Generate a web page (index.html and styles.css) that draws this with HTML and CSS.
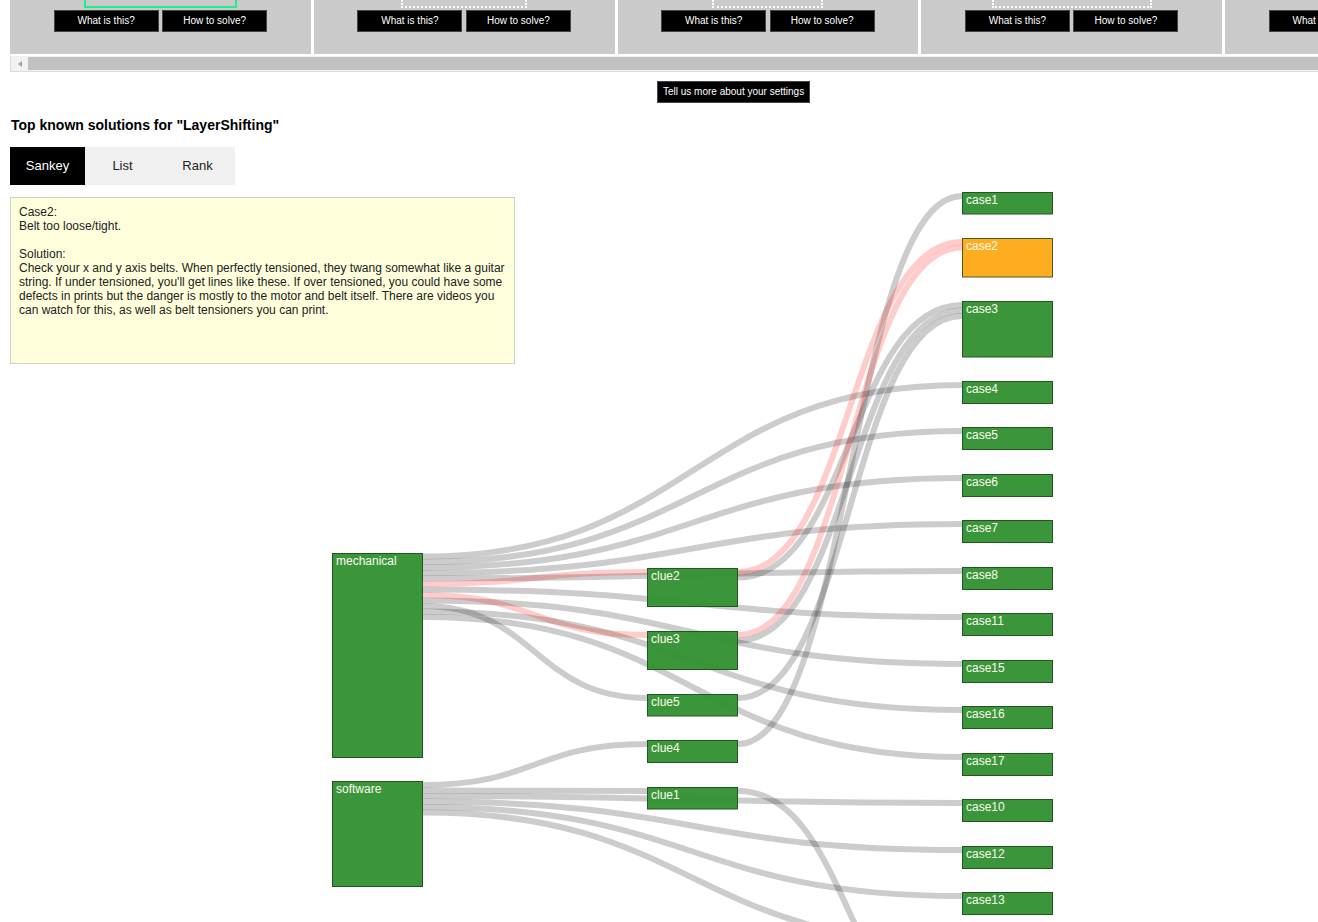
FILE: index.html
```html
<!DOCTYPE html>
<html lang="en">
<head>
<meta charset="utf-8">
<title>Top known solutions</title>
<link rel="stylesheet" href="styles.css">
</head>
<body>
<div class="page">
  <div class="strip">
    <div class="panels">
      <div class="panel">
        <div class="thumb thumb-new t1"></div>
        <div class="btns"><button class="btn">What is this?</button><button class="btn">How to solve?</button></div>
      </div>
      <div class="panel">
        <div class="thumb thumb-dot t2"></div>
        <div class="btns"><button class="btn">What is this?</button><button class="btn">How to solve?</button></div>
      </div>
      <div class="panel">
        <div class="thumb thumb-dot t3"></div>
        <div class="btns"><button class="btn">What is this?</button><button class="btn">How to solve?</button></div>
      </div>
      <div class="panel">
        <div class="thumb thumb-dot t4"></div>
        <div class="btns"><button class="btn">What is this?</button><button class="btn">How to solve?</button></div>
      </div>
      <div class="panel">
        <div class="thumb t5"></div>
        <div class="btns"><button class="btn">What is this?</button><button class="btn">How to solve?</button></div>
      </div>
    </div>
    <div class="hbar"><div class="hbar-btn"><span class="hbar-arrow"></span></div><div class="hbar-thumb"></div></div>
  </div>

  <div class="settings-row"><button class="btn btn-settings">Tell us more about your settings</button></div>

  <div class="title">Top known solutions for "LayerShifting"</div>

  <div class="tabs">
    <div class="tab active">Sankey</div>
    <div class="tab">List</div>
    <div class="tab">Rank</div>
  </div>

  <div class="chart">
    <svg class="sankey" width="1308" height="737" viewBox="10 185 1308 737">
      <g class="links">
        <path class="link" d="M423,556.5C692.5,556.5 692.5,385 962,385"/>
        <path class="link" d="M423,562C692.5,562 692.5,431 962,431"/>
        <path class="link" d="M423,567.5C692.5,567.5 692.5,478 962,478"/>
        <path class="link" d="M423,573C692.5,573 692.5,524 962,524"/>
        <path class="link" d="M423,578.5C692.5,578.5 692.5,571 962,571"/>
        <path class="link" d="M423,589.5C692.5,589.5 692.5,617 962,617"/>
        <path class="link" d="M423,600.5C692.5,600.5 692.5,664 962,664"/>
        <path class="link" d="M423,606C535,606 535,698 647,698"/>
        <path class="link" d="M423,611.5C692.5,611.5 692.5,710 962,710"/>
        <path class="link" d="M423,617C692.5,617 692.5,757 962,757"/>
        <path class="link" d="M423,785C535,785 535,744 647,744"/>
        <path class="link" d="M423,790.5C535,790.5 535,791 647,791"/>
        <path class="link" d="M423,796C692.5,796 692.5,803 962,803"/>
        <path class="link" d="M423,801.5C692.5,801.5 692.5,850 962,850"/>
        <path class="link" d="M423,807C692.5,807 692.5,896 962,896"/>
        <path class="link" d="M423,812.5C692.5,812.5 692.5,943 962,943"/>
        <path class="link" d="M738,577.5C850,577.5 850,305 962,305"/>
        <path class="link" d="M738,640.5C850,640.5 850,310.5 962,310.5"/>
        <path class="link" d="M738,698C850,698 850,316 962,316"/>
        <path class="link" d="M738,744C850,744 850,196 962,196"/>
        <path class="link" d="M738,791C850,791 850,1036 962,1036"/>
        <path class="link link-hl" d="M423,584C535,584 535,572 647,572"/>
        <path class="link link-hl" d="M423,595C535,595 535,635 647,635"/>
        <path class="link link-hl" d="M738,572C850,572 850,242 962,242"/>
        <path class="link link-hl" d="M738,635C850,635 850,247.5 962,247.5"/>
      </g>
      <g class="nodes">
        <rect class="node" x="332.5" y="553.5" width="90" height="204"/>
        <text class="label" x="336" y="564.5">mechanical</text>
        <rect class="node" x="332.5" y="781.5" width="90" height="105"/>
        <text class="label" x="336" y="792.5">software</text>

        <rect class="node" x="647.5" y="568.5" width="90" height="38"/>
        <text class="label" x="651" y="579.5">clue2</text>
        <rect class="node" x="647.5" y="631.5" width="90" height="38"/>
        <text class="label" x="651" y="642.5">clue3</text>
        <rect class="node" x="647.5" y="694.5" width="90" height="21.5"/>
        <text class="label" x="651" y="705.5">clue5</text>
        <rect class="node" x="647.5" y="740.5" width="90" height="22"/>
        <text class="label" x="651" y="751.5">clue4</text>
        <rect class="node" x="647.5" y="787.5" width="90" height="21.5"/>
        <text class="label" x="651" y="798.5">clue1</text>

        <rect class="node" x="962.5" y="192.5" width="90" height="21.5"/>
        <text class="label" x="966" y="203.5">case1</text>
        <rect class="node node-hl" x="962.5" y="238.5" width="90" height="38.5"/>
        <text class="label" x="966" y="249.5">case2</text>
        <rect class="node" x="962.5" y="301.5" width="90" height="55.5"/>
        <text class="label" x="966" y="312.5">case3</text>
        <rect class="node" x="962.5" y="381.5" width="90" height="22"/>
        <text class="label" x="966" y="392.5">case4</text>
        <rect class="node" x="962.5" y="427.5" width="90" height="22"/>
        <text class="label" x="966" y="438.5">case5</text>
        <rect class="node" x="962.5" y="474.5" width="90" height="22"/>
        <text class="label" x="966" y="485.5">case6</text>
        <rect class="node" x="962.5" y="520.5" width="90" height="22"/>
        <text class="label" x="966" y="531.5">case7</text>
        <rect class="node" x="962.5" y="567.5" width="90" height="22"/>
        <text class="label" x="966" y="578.5">case8</text>
        <rect class="node" x="962.5" y="613.5" width="90" height="22"/>
        <text class="label" x="966" y="624.5">case11</text>
        <rect class="node" x="962.5" y="660.5" width="90" height="22"/>
        <text class="label" x="966" y="671.5">case15</text>
        <rect class="node" x="962.5" y="706.5" width="90" height="22"/>
        <text class="label" x="966" y="717.5">case16</text>
        <rect class="node" x="962.5" y="753.5" width="90" height="22"/>
        <text class="label" x="966" y="764.5">case17</text>
        <rect class="node" x="962.5" y="799.5" width="90" height="22"/>
        <text class="label" x="966" y="810.5">case10</text>
        <rect class="node" x="962.5" y="846.5" width="90" height="22"/>
        <text class="label" x="966" y="857.5">case12</text>
        <rect class="node" x="962.5" y="892.5" width="90" height="22"/>
        <text class="label" x="966" y="903.5">case13</text>
      </g>
    </svg>

    <div class="infobox">
      Case2:<br>
      Belt too loose/tight.<br>
      <br>
      Solution:<br>
      Check your x and y axis belts. When perfectly tensioned, they twang somewhat like a guitar string. If under tensioned, you'll get lines like these. If over tensioned, you could have some defects in prints but the danger is mostly to the motor and belt itself. There are videos you can watch for this, as well as belt tensioners you can print.
    </div>
  </div>
</div>
</body>
</html>
```

FILE: styles.css
```css
html, body {
  margin: 0;
  padding: 0;
  background: #fff;
  overflow: hidden;
}

body {
  font-family: "Liberation Sans", Arial, sans-serif;
  color: #000;
}

.page {
  padding-left: 10px;
}

/* top strip of example panels */
.strip {
  overflow: hidden;
}

.panels {
  display: flex;
  gap: 3px;
}

.panel {
  flex: 0 0 300.75px;
  height: 54px;
  background: #cacaca;
  display: flex;
  flex-direction: column;
  align-items: center;
}

.thumb {
  height: 8px;
  box-sizing: border-box;
  border: 2px solid transparent;
  border-top: 0;
}

.thumb-new {
  border-color: #1ff08a;
  border-style: solid;
  border-top: 0;
}

.thumb-dot {
  border-color: #fff;
  border-style: dotted;
  border-top: 0;
}

.t1 { width: 153px; }
.t2 { width: 126px; }
.t3 { width: 111px; }
.t4 { width: 160px; }
.t5 { width: 120px; }

.btns {
  display: flex;
  gap: 3.5px;
  margin-top: 2px;
}

.btn {
  display: block;
  width: 105px;
  height: 22px;
  margin: 0;
  padding: 0;
  box-sizing: border-box;
  background: #000;
  color: #fff;
  border: 1px solid #454545;
  border-radius: 0;
  font-family: "Liberation Sans", Arial, sans-serif;
  font-size: 10px;
  line-height: 20px;
  text-align: center;
  cursor: pointer;
}

/* fake horizontal scrollbar */
.hbar {
  margin-top: 2px;
  height: 15px;
  display: flex;
  background: #f1f1f1;
  border-left: 1px solid #dcdcdc;
  border-bottom: 1px solid #dcdcdc;
}

.hbar-btn {
  flex: 0 0 17px;
  display: flex;
  align-items: center;
  justify-content: center;
}

.hbar-arrow {
  width: 0;
  height: 0;
  border-top: 3px solid transparent;
  border-bottom: 3px solid transparent;
  border-right: 4px solid #a3a3a3;
}

.hbar-thumb {
  flex: 1;
  margin: 1px 0;
  background: #c1c1c1;
}

.settings-row {
  margin-top: 9px;
  display: flex;
}

.btn-settings {
  width: auto;
  margin-left: 647px;
  padding: 0 5px;
}

.title {
  margin-top: 13px;
  font-size: 14px;
  font-weight: bold;
  line-height: 18px;
  padding-left: 1px;
}

.tabs {
  margin-top: 13px;
  display: flex;
}

.tab {
  width: 75px;
  height: 38px;
  line-height: 38px;
  text-align: center;
  font-size: 13px;
  background: #f0f0f0;
  color: #222;
}

.tab.active {
  background: #000;
  color: #fff;
}

/* sankey chart */
.chart {
  position: relative;
  height: 737px;
}

.sankey {
  display: block;
}

.link {
  fill: none;
  stroke: #000;
  stroke-opacity: 0.2;
  stroke-width: 6;
}

.link-hl {
  stroke: #f00;
}

.node {
  fill: #309030;
  fill-opacity: 0.95;
  stroke: #22581f;
  stroke-width: 1;
}

.node-hl {
  fill: #ffa914;
  stroke: #4c5a1e;
}

.label {
  font-family: "Liberation Sans", Arial, sans-serif;
  font-size: 12px;
  fill: #fbfbee;
}

.infobox {
  position: absolute;
  top: 12px;
  left: 0;
  width: 505px;
  height: 167px;
  box-sizing: border-box;
  padding: 7px 8px;
  background: #ffffdc;
  border: 1px solid #cfcfcf;
  font-size: 12px;
  line-height: 14px;
  color: #222;
}
```
